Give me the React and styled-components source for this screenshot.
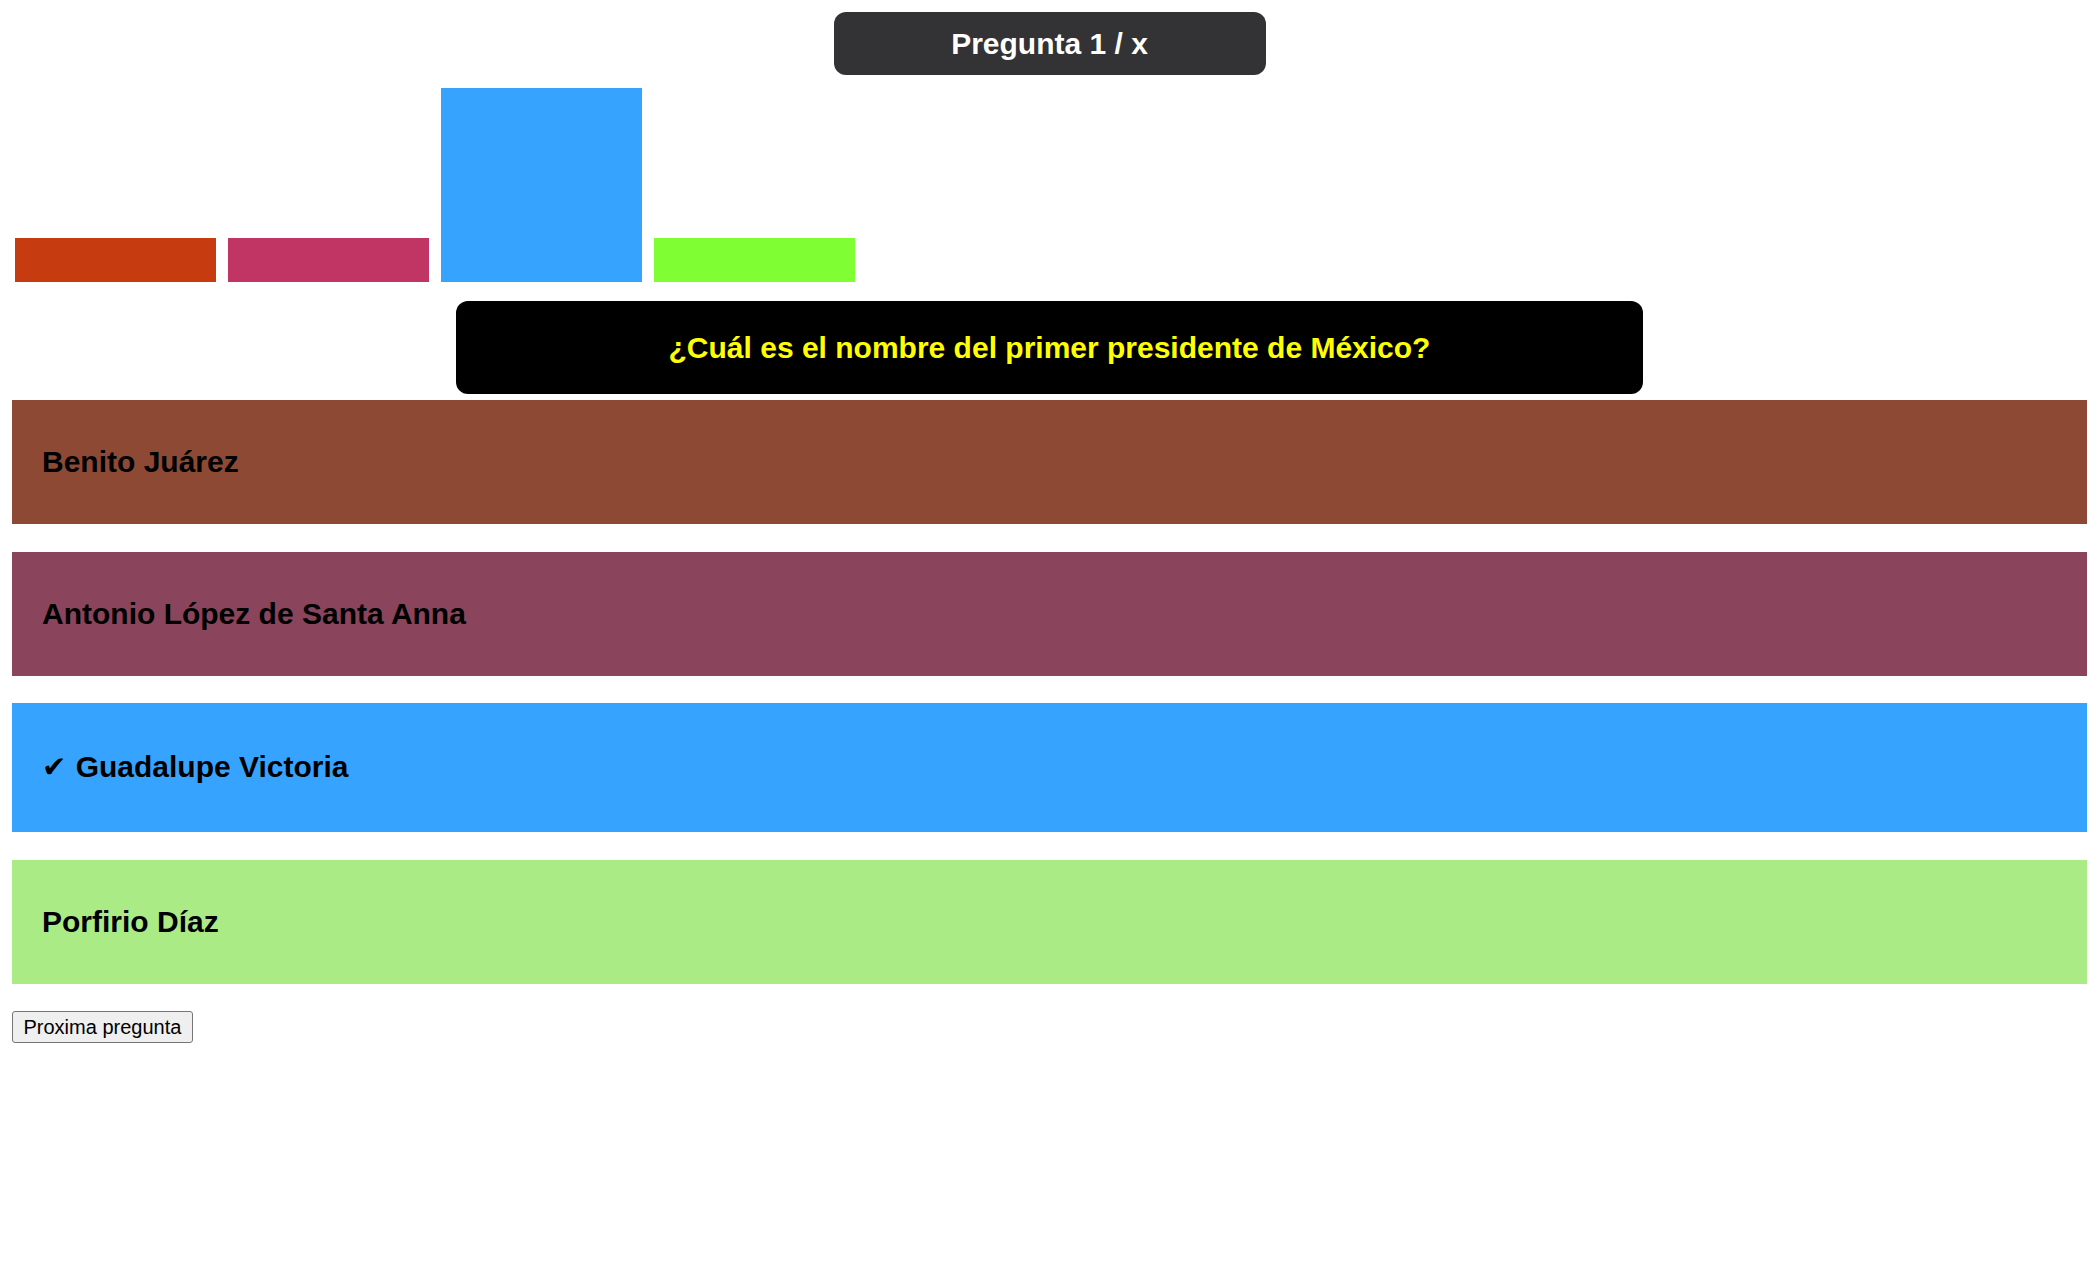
import React from "react";
import styled, { createGlobalStyle } from "styled-components";

const GlobalStyle = createGlobalStyle`
  html, body { background: #ffffff; }
  body {
    margin: 12px;
    font-family: "Liberation Sans", Arial, Helvetica, sans-serif;
    color: #000;
  }
`;

const Page = styled.div`
  display: flex;
  flex-direction: column;
`;

const Header = styled.div`
  align-self: center;
  width: 432px;
  height: 63px;
  box-sizing: border-box;
  display: flex;
  align-items: center;
  justify-content: center;
  background: #333235;
  border-radius: 12px;
  color: #ffffff;
  font-weight: 700;
  font-size: 30px;
`;

const Chart = styled.div`
  margin-top: 13px;
  height: 194px;
  padding-left: 3px;
  display: flex;
  align-items: flex-end;
  gap: 12px;
`;

const Bar = styled.div`
  width: 201px;
  height: ${(p) => p.$h}px;
  background: ${(p) => p.$color};
`;

const Question = styled.div`
  margin-top: 19px;
  align-self: center;
  width: 1187px;
  box-sizing: border-box;
  padding: 29px 20px;
  line-height: 35px;
  background: #000000;
  border-radius: 12px;
  color: #ffff00;
  font-weight: 700;
  font-size: 30px;
  text-align: center;
`;

const Answers = styled.div`
  margin-top: 6px;
  display: flex;
  flex-direction: column;
  gap: 27.5px;
`;

const Answer = styled.div`
  padding: 45px 30px;
  line-height: 34px;
  background: ${(p) => p.$color};
  font-weight: 700;
  font-size: 30px;
  color: #000;
`;

const Check = styled.span`
  font-family: "DejaVu Sans", sans-serif;
  font-size: 29px;
  line-height: 39px;
  margin-right: 1px;
`;

const NextButton = styled.button`
  margin-top: 27.5px;
  align-self: flex-start;
  font-family: "Liberation Sans", Arial, sans-serif;
  font-size: 20px;
  line-height: 23px;
  padding: 3.5px 10.5px;
  background: #efefef;
  color: #000;
  border: 1.5px solid #767676;
  border-radius: 3px;
`;

const bars = [
  { color: "#c63c10", votes: 0 },
  { color: "#c03563", votes: 0 },
  { color: "#36a4ff", votes: 1 },
  { color: "#7fff33", votes: 0 },
];

const answers = [
  { text: "Benito Juárez", color: "#8e4935" },
  { text: "Antonio López de Santa Anna", color: "#8a445b" },
  { text: "Guadalupe Victoria", color: "#36a4ff", correct: true },
  { text: "Porfirio Díaz", color: "#aaeb86" },
];

export default function App() {
  return (
    <>
      <GlobalStyle />
      <Page>
        <Header>Pregunta 1 / x</Header>
        <Chart>
          {bars.map((b, i) => (
            <Bar key={i} $color={b.color} $h={44 + b.votes * 150} />
          ))}
        </Chart>
        <Question>¿Cuál es el nombre del primer presidente de México?</Question>
        <Answers>
          {answers.map((a, i) => (
            <Answer key={i} $color={a.color}>
              {a.correct && <Check>✔</Check>}
              {a.correct ? " " : ""}
              {a.text}
            </Answer>
          ))}
        </Answers>
        <NextButton>Proxima pregunta</NextButton>
      </Page>
    </>
  );
}
